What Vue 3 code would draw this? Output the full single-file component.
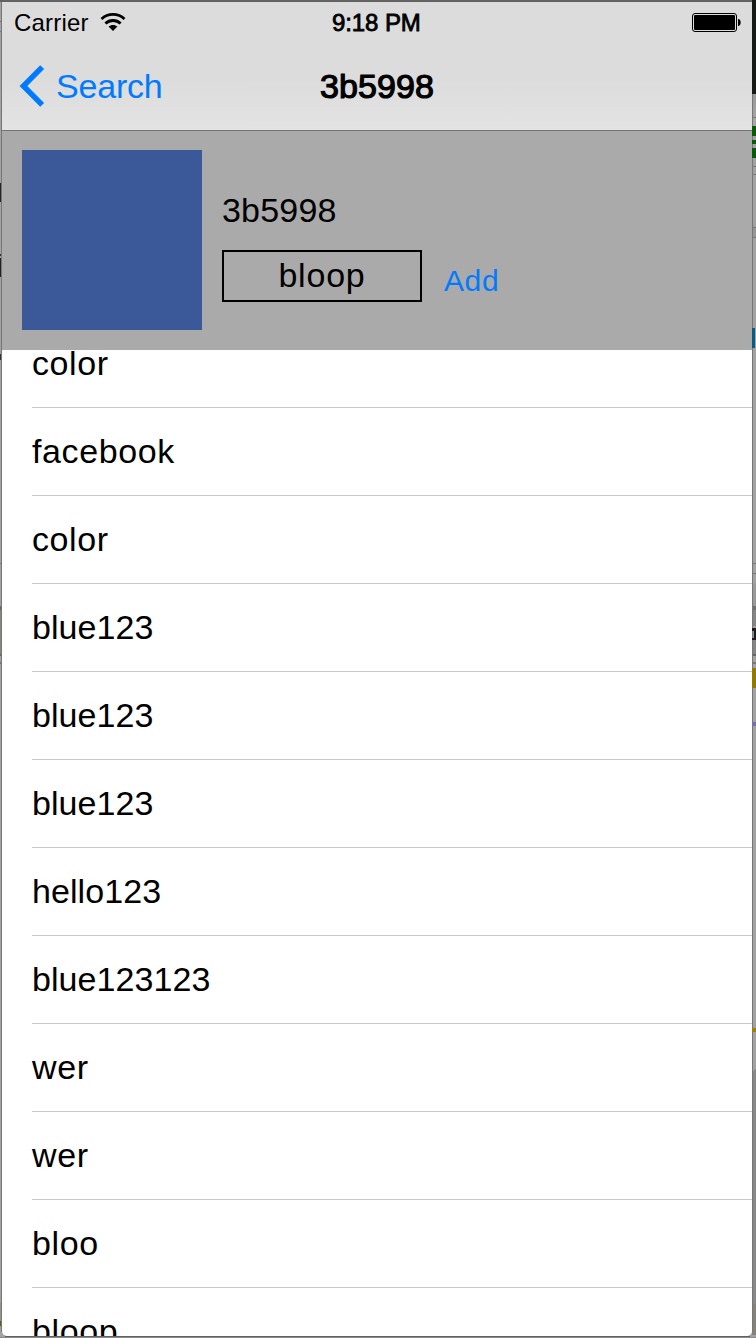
<script setup>
const tags = ['color', 'facebook', 'color', 'blue123', 'blue123', 'blue123', 'hello123', 'blue123123', 'wer', 'wer', 'bloo', 'bloop']
const hasDigits = (tag) => /\d/.test(tag)
</script>

<template>
  <div class="desktop">
    <svg class="backdrop" width="756" height="1338" viewBox="0 0 756 1338" shape-rendering="crispEdges" aria-hidden="true">
      <defs>
        <linearGradient id="edge" x1="0" y1="0" x2="0" y2="1">
          <stop offset="0" stop-color="#999" />
          <stop offset="1" stop-color="#a8a8a8" />
        </linearGradient>
      </defs>
      <rect width="756" height="1338" fill="#a2a2a2" />
      <rect width="756" height="2" fill="#626262" />
      <rect y="21" width="2" height="1" fill="#777" />
      <rect y="31" width="2" height="1" fill="#777" />
      <rect y="183" width="2" height="19" fill="#242424" />
      <rect y="254" width="2" height="2" fill="#333" />
      <path d="M0 258h1v4h1v11h-1v4h-1z" fill="#222" />
      <rect y="354" width="2" height="6" fill="#333" />
      <rect y="563" width="2" height="1" fill="#777" />
      <rect y="606" width="2" height="50" fill="#666" />
      <rect y="610" width="2" height="44" fill="#858876" />
      <rect y="662" width="2" height="2" fill="#777" />
      <rect y="1303" width="2" height="18" fill="#969484" />
      <rect y="1321" width="2" height="5" fill="#596020" />

      <rect x="752" y="0" width="4" height="94" fill="#171915" />
      <rect x="752" y="94" width="4" height="32" fill="url(#edge)" />
      <g fill="#777">
        <rect x="752" y="117" width="4" height="1" />
        <rect x="752" y="166" width="4" height="1" />
        <rect x="752" y="174" width="4" height="1" />
        <rect x="752" y="227" width="4" height="1" />
        <rect x="752" y="237" width="4" height="1" />
        <rect x="752" y="563" width="4" height="1" />
        <rect x="752" y="573" width="4" height="1" />
      </g>
      <rect x="752" y="228" width="4" height="9" fill="#969696" />
      <path d="M752 586l4-4v24h-4z" fill="#999" />
      <rect x="752" y="606" width="4" height="4" fill="#707070" />
      <rect x="752" y="610" width="4" height="16" fill="#858585" />
      <rect x="752" y="640" width="4" height="16" fill="#858585" />
      <rect x="752" y="654" width="4" height="2" fill="#666" />
      <rect x="752" y="662" width="4" height="2" fill="#777" />
      <path d="M752 1072l4-3v235h-4z" fill="#888" />
      <rect x="752" y="1304" width="4" height="31" fill="#85827a" />
      <rect x="1" y="2" width="1" height="1330" fill="#777" />
      <rect x="752" y="94" width="1" height="1238" fill="#777" />
      <path d="M752 628h4v12h-2v-9h-2z" fill="#211a18" />
      <rect x="753" y="631" width="1" height="7" fill="#8093aa" />
      <rect x="752" y="638" width="2" height="2" fill="#211a18" />

      <g fill="#075b04">
        <rect x="752" y="126" width="4" height="10" />
        <rect x="752" y="140" width="4" height="4" />
        <rect x="752" y="148" width="4" height="10" />
      </g>
      <rect x="752" y="328" width="3" height="20" fill="#075c85" />
      <rect x="752" y="668" width="4" height="20" fill="#927900" />
      <rect x="752" y="722" width="4" height="4" fill="#7770a8" />
      <rect x="752" y="1028" width="4" height="4" fill="#9b8200" />
      <rect x="5" y="1336" width="745" height="1" fill="#606060" />
      <rect y="1337" width="756" height="1" fill="#8b8b8b" />
    </svg>

    <main class="phone">
      <header class="top">
        <div class="status">
          <span class="carrier">Carrier</span>
          <svg class="wifi" width="26" height="18" viewBox="0 0 26 18" aria-hidden="true">
            <g fill="none" stroke="#000" stroke-width="2.8">
              <path d="M1.5 5.9C7.9-.1 18.1-.1 24.5 5.9" />
              <path d="M5.4 10.5C9.6 6.5 16.4 6.5 20.6 10.5" />
            </g>
            <path d="M13 18L8.6 13.6C11.1 11.5 14.9 11.5 17.4 13.6Z" />
          </svg>
          <span class="clock">9:18 PM</span>
          <svg class="battery" width="50" height="20" viewBox="0 0 50 20" aria-hidden="true">
            <rect x=".5" y=".5" width="44" height="18" rx="2.5" fill="none" stroke="#000" />
            <rect x="2" y="2" width="41" height="15" rx="1" />
            <path d="M46 6C49.6 6 49.6 13 46 13Z" />
          </svg>
        </div>
        <nav class="nav">
          <a class="back">
            <svg width="26" height="42" viewBox="0 0 26 42" aria-hidden="true">
              <path d="M0.6 21L21.2 0.2L25.1 4L8.3 21L25.1 38L21.2 41.8Z" fill="#007aff" />
            </svg>
            <span>Search</span>
          </a>
          <h1>3b5998</h1>
        </nav>
      </header>

      <section class="detail">
        <div class="swatch"></div>
        <div class="fields">
          <div class="name">3b5998</div>
          <div class="entry">
            <div class="input">bloop</div>
            <span class="add">Add</span>
          </div>
        </div>
      </section>

      <div class="list">
        <ul>
          <li v-for="(tag, i) in tags" :key="i" :class="{ numeric: hasDigits(tag) }">{{ tag }}</li>
        </ul>
      </div>
    </main>
  </div>
</template>

<style>
body { margin: 0; overflow: hidden; }
</style>

<style scoped>
.desktop {
  position: relative;
  width: 756px;
  height: 1338px;
  box-sizing: border-box;
  padding: 2px 4px 2px 2px;
  overflow: hidden;
  font-family: "Liberation Sans", Arial, sans-serif;
  color: #000;
}
.backdrop { position: absolute; left: 0; top: 0; display: block; }
.phone {
  position: relative;
  display: flex;
  flex-direction: column;
  width: 750px;
  height: 1334px;
  overflow: hidden;
  background: #fff;
  border-radius: 0 0 5px 5px;
}
.top {
  flex: none;
  box-sizing: border-box;
  height: 129px;
  border-bottom: 1px solid #747474;
  background: linear-gradient(#dcdcdc 0, #dcdcdc 60%, #e3e3e3 100%);
}
.status {
  display: grid;
  grid-template-columns: 76px 242px 1fr 60px;
  height: 40px;
  padding-left: 12px;
  font-size: 24px;
  line-height: 42px;
  white-space: nowrap;
}
.carrier { letter-spacing: 0.2px; }
.wifi { margin: 11px 0 0 9.5px; }
.clock { -webkit-text-stroke: 0.8px #000; letter-spacing: -0.1px; }
.battery { margin-top: 11px; }
.nav {
  display: grid;
  grid-template-columns: 1fr 118px 1fr;
  height: 88px;
  font-size: 34px;
  line-height: 88px;
}
.back { display: flex; align-items: center; color: #007aff; padding-left: 17px; }
.back span { margin-left: 11px; letter-spacing: -0.2px; }
h1 {
  margin: 0;
  font-size: 34px;
  font-weight: 400;
  text-align: center;
  letter-spacing: 0.1px;
  -webkit-text-stroke: 1.2px #000;
}
.detail {
  flex: none;
  display: flex;
  gap: 20px;
  box-sizing: border-box;
  height: 219px;
  padding: 19px 20px 20px;
  background: #aaa;
}
.swatch { width: 180px; height: 180px; background: #3b5998; }
.fields { padding-top: 40px; }
.name { height: 60px; font-size: 34px; line-height: 40px; letter-spacing: 0.2px; }
.entry { display: flex; }
.input {
  box-sizing: border-box;
  width: 200px;
  height: 52px;
  border: 2px solid #000;
  font-size: 34px;
  line-height: 47px;
  text-align: center;
  letter-spacing: 0.8px;
}
.add { margin-left: 22px; font-size: 30px; line-height: 62px; color: #007aff; letter-spacing: 0.6px; }
.list { flex: 1; min-height: 0; overflow: hidden; }
ul { list-style: none; margin: -30px 0 0; padding: 0 0 0 30px; }
li {
  box-sizing: border-box;
  height: 88px;
  border-bottom: 1px solid #c8c7cc;
  font-size: 34px;
  line-height: 86px;
  letter-spacing: 0.6px;
}
li.numeric { letter-spacing: 0.07px; }
</style>
